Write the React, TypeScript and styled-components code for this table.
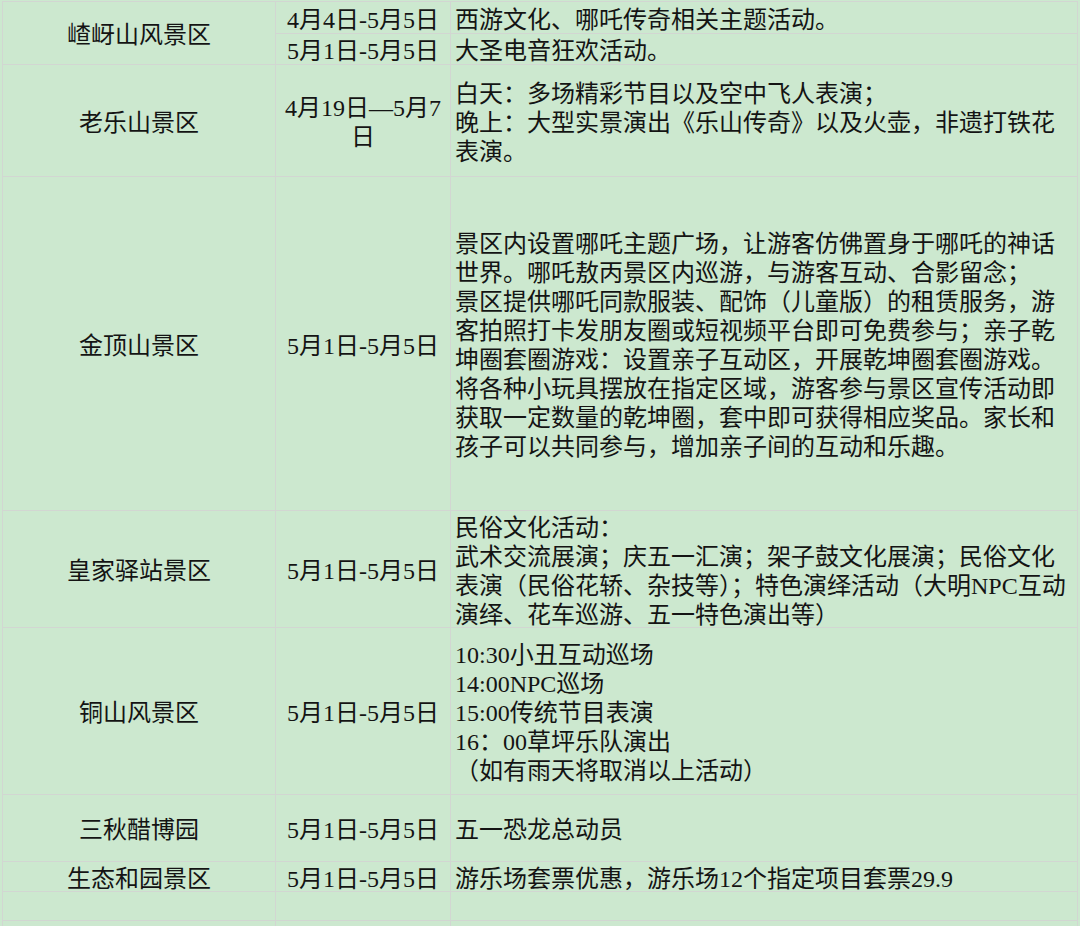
import styled, { createGlobalStyle } from "styled-components";

interface Entry {
    date: string[];
    desc: string[];
    height: number;
}

interface Spot {
    name: string;
    entries: Entry[];
}

const GlobalStyle = createGlobalStyle`
    html, body {
        margin: 0;
        padding: 0;
        background: #cce8cf;
    }
`

const Page = styled.div`
    padding: 1px 0 0 2px;
`

const Sheet = styled.div<{ $rows: string }>`
    display: grid;
    grid-template-columns: 272px 174px 626px;
    grid-template-rows: ${(p) => p.$rows};
    gap: 1px;
    width: 1076px;
    padding: 1px;
    box-sizing: border-box;
    background: #d2d6d2;
    font-family: "Liberation Serif", "Noto Sans CJK SC", serif;
    font-size: 24px;
    line-height: 29px;
    color: #141414;
`

const Cell = styled.div<{ $span?: number; $left?: boolean }>`
    grid-row: span ${(p) => p.$span ?? 1};
    background: #cce8cf;
    display: flex;
    flex-direction: column;
    justify-content: center;
    align-items: ${(p) => (p.$left ? "flex-start" : "center")};
    text-align: ${(p) => (p.$left ? "left" : "center")};
    padding: ${(p) => (p.$left ? "5px 0 0 4px" : "5px 4px 0")};
    overflow: hidden;
    min-width: 0;
`

const Line = styled.div`
    white-space: nowrap;
`

const spots: Spot[] = [
    {
        name: "嵖岈山风景区",
        entries: [
            { date: ["4月4日-5月5日"], desc: ["西游文化、哪吒传奇相关主题活动。"], height: 31 },
            { date: ["5月1日-5月5日"], desc: ["大圣电音狂欢活动。"], height: 30 },
        ],
    },
    {
        name: "老乐山景区",
        entries: [
            {
                date: ["4月19日—5月7", "日"],
                desc: [
                    "白天：多场精彩节目以及空中飞人表演；",
                    "晚上：大型实景演出《乐山传奇》以及火壶，非遗打铁花",
                    "表演。",
                ],
                height: 111,
            },
        ],
    },
    {
        name: "金顶山景区",
        entries: [
            {
                date: ["5月1日-5月5日"],
                desc: [
                    "景区内设置哪吒主题广场，让游客仿佛置身于哪吒的神话",
                    "世界。哪吒敖丙景区内巡游，与游客互动、合影留念；",
                    "景区提供哪吒同款服装、配饰（儿童版）的租赁服务，游",
                    "客拍照打卡发朋友圈或短视频平台即可免费参与；亲子乾",
                    "坤圈套圈游戏：设置亲子互动区，开展乾坤圈套圈游戏。",
                    "将各种小玩具摆放在指定区域，游客参与景区宣传活动即",
                    "获取一定数量的乾坤圈，套中即可获得相应奖品。家长和",
                    "孩子可以共同参与，增加亲子间的互动和乐趣。",
                ],
                height: 333,
            },
        ],
    },
    {
        name: "皇家驿站景区",
        entries: [
            {
                date: ["5月1日-5月5日"],
                desc: [
                    "民俗文化活动：",
                    "武术交流展演；庆五一汇演；架子鼓文化展演；民俗文化",
                    "表演（民俗花轿、杂技等）；特色演绎活动（大明NPC互动",
                    "演绎、花车巡游、五一特色演出等）",
                ],
                height: 116,
            },
        ],
    },
    {
        name: "铜山风景区",
        entries: [
            {
                date: ["5月1日-5月5日"],
                desc: [
                    "10:30小丑互动巡场",
                    "14:00NPC巡场",
                    "15:00传统节目表演",
                    "16：00草坪乐队演出",
                    "（如有雨天将取消以上活动）",
                ],
                height: 166,
            },
        ],
    },
    {
        name: "三秋醋博园",
        entries: [{ date: ["5月1日-5月5日"], desc: ["五一恐龙总动员"], height: 66 }],
    },
    {
        name: "生态和园景区",
        entries: [
            {
                date: ["5月1日-5月5日"],
                desc: ["游乐场套票优惠，游乐场12个指定项目套票29.9"],
                height: 29,
            },
        ],
    },
    { name: "", entries: [{ date: [], desc: [], height: 28 }] },
    { name: "", entries: [{ date: [], desc: [], height: 30 }] },
];

function Lines({ text }: { text: string[] }) {
    return (
        <>
            {text.map((t, i) => (
                <Line key={i}>{t}</Line>
            ))}
        </>
    );
}

export default function App() {
    const rows = spots
        .flatMap((s) => s.entries.map((e) => `${e.height}px`))
        .join(" ");

    return (
        <Page>
            <GlobalStyle />
            <Sheet $rows={rows}>
                {spots.map((spot, i) =>
                    spot.entries.map((entry, j) => (
                        <>
                            {j === 0 && (
                                <Cell key={`n${i}`} $span={spot.entries.length}>
                                    <Line>{spot.name}</Line>
                                </Cell>
                            )}
                            <Cell key={`d${i}${j}`}>
                                <Lines text={entry.date} />
                            </Cell>
                            <Cell key={`t${i}${j}`} $left>
                                <Lines text={entry.desc} />
                            </Cell>
                        </>
                    ))
                )}
            </Sheet>
        </Page>
    );
}
